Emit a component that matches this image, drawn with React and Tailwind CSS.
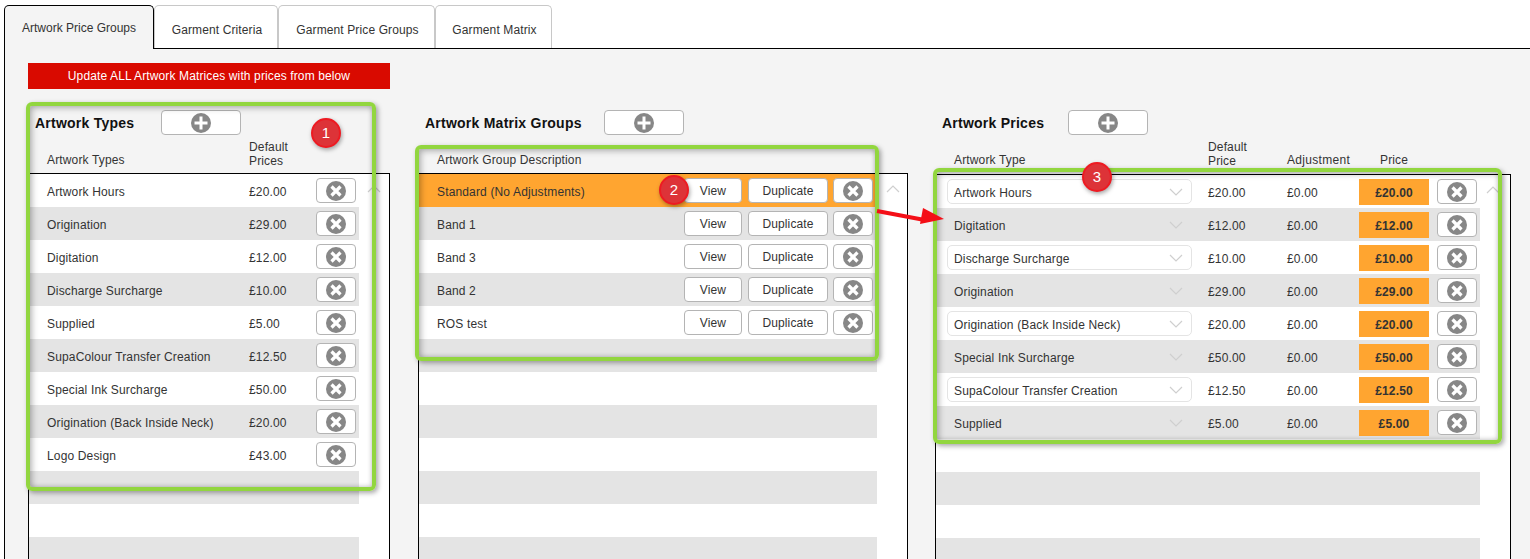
import React from "react";

const artworkTypes = [
  ["Artwork Hours", "£20.00"],
  ["Origination", "£29.00"],
  ["Digitation", "£12.00"],
  ["Discharge Surcharge", "£10.00"],
  ["Supplied", "£5.00"],
  ["SupaColour Transfer Creation", "£12.50"],
  ["Special Ink Surcharge", "£50.00"],
  ["Origination (Back Inside Neck)", "£20.00"],
  ["Logo Design", "£43.00"],
];

const matrixGroups = ["Standard (No Adjustments)", "Band 1", "Band 3", "Band 2", "ROS test"];

const artworkPrices = [
  ["Artwork Hours", "£20.00", "£20.00"],
  ["Digitation", "£12.00", "£12.00"],
  ["Discharge Surcharge", "£10.00", "£10.00"],
  ["Origination", "£29.00", "£29.00"],
  ["Origination (Back Inside Neck)", "£20.00", "£20.00"],
  ["Special Ink Surcharge", "£50.00", "£50.00"],
  ["SupaColour Transfer Creation", "£12.50", "£12.50"],
  ["Supplied", "£5.00", "£5.00"],
];

const rowBg = (i) => (i % 2 === 0 ? "bg-white" : "bg-[#e4e4e4]");

const CrossIcon = () => (
  <svg width="20" height="20" viewBox="0 0 20 20" className="shrink-0">
    <circle cx="10" cy="10" r="10" fill="#878787" />
    <path d="M5.5 5.5 14.5 14.5M14.5 5.5 5.5 14.5" stroke="#fff" strokeWidth="3.2" />
  </svg>
);

const PlusIcon = () => (
  <svg width="20" height="20" viewBox="0 0 20 20" className="shrink-0">
    <circle cx="10" cy="10" r="10" fill="#878787" />
    <path d="M10 3.5V16.5M3.5 10H16.5" stroke="#fff" strokeWidth="3" />
  </svg>
);

const Chevron = ({ up, className }) => (
  <svg width="14" height="8" viewBox="0 0 14 8" className={className}>
    <path d={up ? "M1 7 7 1l6 6" : "M1 1l6 6 6-6"} fill="none" stroke="#cfcfcf" strokeWidth="1.2" />
  </svg>
);

const Button = ({ className, children }) => (
  <button className={`h-[25px] bg-white border border-[#b4b4b4] rounded-[4px] flex items-center justify-center text-[12px] tracking-[0.12px] text-[#333] ${className}`}>
    {children}
  </button>
);

const DeleteButton = () => (
  <Button className="w-[40px] shrink-0">
    <CrossIcon />
  </Button>
);

const Heading = ({ title, width }) => (
  <div className="flex h-[25px] items-center">
    <div className={`${width} pl-[7px] pt-[2px] text-[14px] font-bold tracking-[0.24px] text-[#111]`}>{title}</div>
    <Button className="w-[80px]">
      <PlusIcon />
    </Button>
  </div>
);

const ListBox = ({ children, arrowClass }) => (
  <div className="relative flex-1 border-x border-t border-black bg-white overflow-hidden">
    {children}
    <Chevron up className={arrowClass} />
  </div>
);

const Tab = ({ label, width, active }) =>
  active ? (
    <div className={`${width} relative z-10 h-[44px] -mb-px bg-[#f4f4f4] border border-b-0 border-black rounded-t-[5px] pt-[14px] text-center text-[12px] leading-[16px] text-[#333]`}>
      {label}
    </div>
  ) : (
    <div className={`${width} h-[43px] bg-white border border-b-0 border-[#c8c8c8] rounded-t-[5px] pt-[16px] pl-[2px] text-center text-[12px] tracking-[0.12px] leading-[16px] text-[#333]`}>
      {label}
    </div>
  );

const Badge = ({ n, className }) => (
  <div className={`absolute w-[30px] h-[30px] rounded-full bg-[#dd3338] border-2 border-[#ee1a22] text-white text-[15px] flex items-center justify-center shadow-[1px_2px_4px_rgba(0,0,0,0.35)] ${className}`}>
    {n}
  </div>
);

const Highlight = ({ className }) => (
  <div className={`absolute border-4 border-[#92d63f] rounded-[6px] shadow-[2px_2px_5px_rgba(0,0,0,0.35),inset_2px_2px_6px_rgba(0,0,0,0.28),inset_-1px_-1px_4px_rgba(0,0,0,0.12)] pointer-events-none ${className}`} />
);

export default function App() {
  return (
    <div className="relative h-screen overflow-hidden bg-white flex flex-col pt-[5px] font-['Liberation_Sans',Arial,sans-serif] text-[12px] text-[#333]">
      <div className="flex pl-[4px]">
        <Tab label="Artwork Price Groups" width="w-[150px]" active />
        <Tab label="Garment Criteria" width="w-[124px]" />
        <Tab label="Garment Price Groups" width="w-[157px]" />
        <Tab label="Garment Matrix" width="w-[117px]" />
      </div>

      <div className="ml-[4px] flex-1 min-h-0 flex flex-col border-l border-t border-black bg-[#f4f4f4] pt-[14px] pl-[23px]">
        <div className="w-[362px] h-[26px] bg-[#d90a00] text-white text-center tracking-[0.12px] leading-[26px]">
          Update ALL Artwork Matrices with prices from below
        </div>

        <div className="flex flex-1 min-h-0 mt-[21px] tracking-[0.15px]">
          {/* Artwork types */}
          <div className="w-[362px] flex flex-col">
            <Heading title="Artwork Types" width="w-[133px]" />
            <div className="flex items-end h-[38px] pb-[5px] leading-[14px]">
              <div className="w-[221px] pl-[19px] pb-[1px]">Artwork Types</div>
              <div>Default<br />Prices</div>
            </div>
            <ListBox arrowClass="absolute left-[338px] top-[11px]">
              {artworkTypes.map(([name, price], i) => (
                <div key={name} className={`flex items-center h-[33px] w-[330px] ${rowBg(i)}`}>
                  <div className="w-[220px] pl-[18px] pt-[2px]">{name}</div>
                  <div className="w-[67px] pt-[2px]">{price}</div>
                  <DeleteButton />
                </div>
              ))}
              {[9, 10, 11].map((i) => (
                <div key={i} className={`h-[33px] w-[330px] ${rowBg(i)}`} />
              ))}
            </ListBox>
          </div>

          {/* Matrix groups */}
          <div className="w-[490px] ml-[28px] flex flex-col">
            <Heading title="Artwork Matrix Groups" width="w-[186px]" />
            <div className="flex items-end h-[38px] pb-[6px] pl-[19px] leading-[14px]">Artwork Group Description</div>
            <ListBox arrowClass="absolute left-[467px] top-[11px]">
              {matrixGroups.map((name, i) => (
                <div key={name} className={`flex items-center h-[33px] w-[458px] pr-[4px] ${i === 0 ? "bg-[#ffa530]" : rowBg(i)}`}>
                  <div className="flex-1 pl-[18px] pt-[2px]">{name}</div>
                  <Button className="w-[58px]">View</Button>
                  <Button className="w-[80px] ml-[6px]">Duplicate</Button>
                  <div className="ml-[5px]">
                    <DeleteButton />
                  </div>
                </div>
              ))}
              {[5, 6, 7, 8, 9, 10, 11].map((i) => (
                <div key={i} className={`h-[33px] w-[458px] ${rowBg(i)}`} />
              ))}
            </ListBox>
          </div>

          {/* Artwork prices */}
          <div className="w-[576px] ml-[27px] flex flex-col">
            <Heading title="Artwork Prices" width="w-[133px]" />
            <div className="flex items-end h-[39px] pb-[6px] leading-[14px]">
              <div className="w-[273px] pl-[19px] pb-[1px]">Artwork Type</div>
              <div className="w-[79px]">Default<br />Price</div>
              <div className="w-[93px] pb-[1px] tracking-[0.3px]">Adjustment</div>
              <div className="pb-[1px]">Price</div>
            </div>
            <ListBox arrowClass="absolute left-[550px] top-[11px]">
              {artworkPrices.map(([name, def, price], i) => (
                <div key={name} className={`flex items-center h-[33px] w-[544px] ${rowBg(i)}`}>
                  <div className={`relative flex items-center w-[245px] h-[25px] ml-[11px] pl-[6px] pt-[2px] rounded-[5px] ${i % 2 === 0 ? "bg-white border border-[#e4e4e4]" : "border border-transparent"}`}>
                    {name}
                    <Chevron className="absolute right-[8px] top-[8px]" />
                  </div>
                  <div className="w-[79px] ml-[16px] pt-[2px]">{def}</div>
                  <div className="w-[72px] pt-[2px]">£0.00</div>
                  <div className="w-[70px] h-[26px] mr-[8px] bg-[#ffa530] font-bold text-center leading-[28px]">{price}</div>
                  <DeleteButton />
                </div>
              ))}
              {[8, 9, 10, 11].map((i) => (
                <div key={i} className={`h-[33px] w-[544px] ${rowBg(i)}`} />
              ))}
            </ListBox>
          </div>
        </div>
      </div>

      {/* annotations drawn over the screenshot */}
      <Highlight className="left-[26px] top-[102px] w-[350px] h-[389px]" />
      <Highlight className="left-[415px] top-[145px] w-[464px] h-[216px]" />
      <Highlight className="left-[933px] top-[168px] w-[569px] h-[276px]" />
      <Badge n="1" className="left-[311px] top-[118px]" />
      <Badge n="2" className="left-[659px] top-[175px]" />
      <Badge n="3" className="left-[1082px] top-[162px]" />
      <svg className="absolute left-[874px] top-[205px]" width="74" height="22" viewBox="0 0 74 22">
        <path d="M3 6 48 14.5" stroke="#f40f17" strokeWidth="4" />
        <path d="M49 3 70 14 46 19Z" fill="#f40f17" />
      </svg>
    </div>
  );
}
